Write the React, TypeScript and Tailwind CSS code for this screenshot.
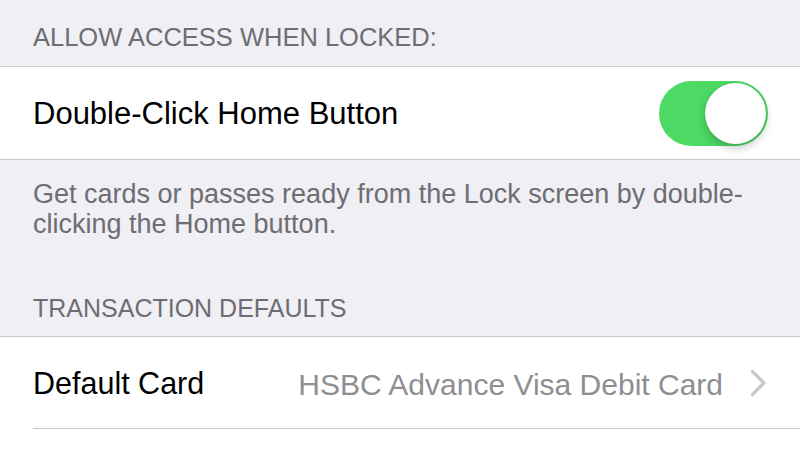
const Toggle = ({ on }: { on: boolean }) => {
  return (
    <div
      className={`flex h-[65px] w-[109px] items-center rounded-full p-[2px] ${
        on ? 'justify-end bg-[#4cd964]' : 'justify-start bg-[#e5e5ea]'
      }`}
    >
      <div className="h-[61px] w-[61px] rounded-full bg-white shadow-[0_4px_8px_rgba(0,0,0,0.22),0_0_1px_rgba(0,0,0,0.2)]" />
    </div>
  );
};

const Chevron = () => (
  <svg width="17" height="28" viewBox="0 0 17 28" fill="none">
    <polyline
      points="2.5,2.5 14,14 2.5,25.5"
      stroke="#c7c7cc"
      strokeWidth="3.2"
      strokeLinecap="round"
      strokeLinejoin="round"
    />
  </svg>
);

const App = () => {
  return (
    <div className="h-[450px] w-[800px] overflow-hidden bg-[#efeff4] font-[family-name:Liberation_Sans,Arial,sans-serif]">
      {/* allow access section */}
      <div className="h-[66px] px-[33px] pt-[22px] text-[25.5px] leading-[30px] text-[#6d6d72]">
        ALLOW ACCESS WHEN LOCKED:
      </div>
      <div className="border-y border-[#c8c7cc] bg-white">
        <div className="flex h-[92px] items-center justify-between pl-[33px] pr-[32px]">
          <span className="pt-[2px] text-[31px] text-black">Double-Click Home Button</span>
          <Toggle on />
        </div>
      </div>
      <div className="px-[33px] pt-[19px] text-[27px] leading-[30px] text-[#6d6d72]">
        Get cards or passes ready from the Lock screen by double-
        <br />
        clicking the Home button.
      </div>

      {/* transaction defaults */}
      <div className="px-[33px] pt-[54px] pb-[13px] text-[25px] leading-[30px] text-[#6d6d72]">
        TRANSACTION DEFAULTS
      </div>
      <div className="border-t border-[#c8c7cc] bg-white">
        <div className="flex h-[91px] items-center pl-[33px] pr-[33px]">
          <span className="pt-[3px] text-[30.5px] text-black">Default Card</span>
          <span className="ml-auto pt-[3px] text-[30px] text-[#8e8e93]">HSBC Advance Visa Debit Card</span>
          <span className="ml-[27px] flex items-center">
            <Chevron />
          </span>
        </div>
        <div className="ml-[33px] border-t border-[#c8c7cc]" />
        <div className="h-[40px]" />
      </div>
    </div>
  );
};

export default App;
